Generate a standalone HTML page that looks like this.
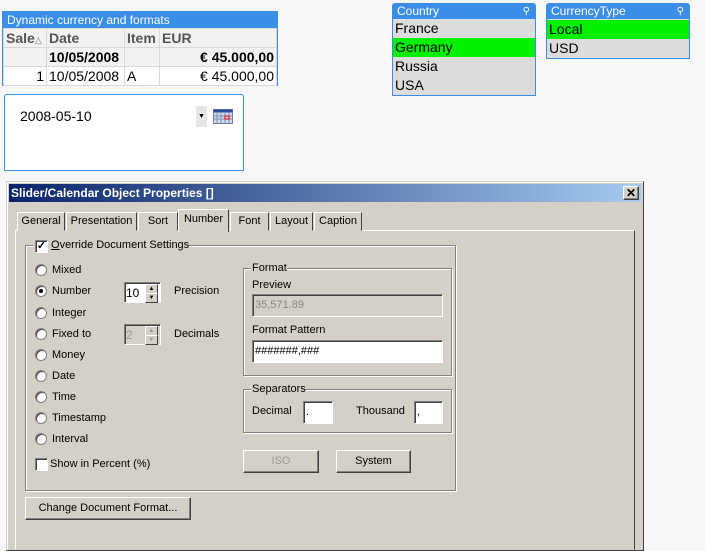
<!DOCTYPE html>
<html><head><meta charset="utf-8"><style>
*{box-sizing:border-box;margin:0;padding:0}
body{width:705px;height:542px;background:#f7f7f7;position:relative;overflow:hidden;font-family:"Liberation Sans",sans-serif}
.a{position:absolute}
.t{font-size:11px;color:#000;white-space:nowrap;position:absolute}
.sunk{position:absolute;background:#fff;border:1px solid;border-color:#808080 #fff #fff #808080;box-shadow:inset 1px 1px 0 #404040}
.btn{position:absolute;background:#d4d0c8;border:1px solid;border-color:#fff #404040 #404040 #fff;box-shadow:inset -1px -1px 0 #808080;font-size:11px;text-align:center;line-height:20px}
.grp{position:absolute;border:1px solid #808080;box-shadow:1px 1px 0 #fff,inset 1px 1px 0 #fff}
.rad{position:absolute;width:12px;height:12px;border-radius:50%;background:#fff;border:1px solid #808080;box-shadow:inset 1px 1px 0 #404040}
.tab{position:absolute;top:212px;height:19px;border:1px solid;border-color:#fff #404040 transparent #fff;font-size:11px;line-height:17px;text-align:center;background:#d4d0c8}
.row{position:absolute;left:0;right:0;height:19px;font-size:14px;padding-left:2px;line-height:19px;color:#000}
.spin{position:absolute;width:13px;height:10px;background:#d4d0c8;border:1px solid;border-color:#fff #404040 #404040 #fff;font-size:6px;line-height:8px;text-align:center}
td{border:1px solid #d8d8d8;padding:0 2px;font-size:14px;height:19px;white-space:nowrap}
</style></head><body>
<!-- table -->
<div class="a" style="left:2px;top:11px;width:276px;height:75px;border:1px solid #3a8ee8;background:#fff">
<div style="height:16px;background:#3a8ee8;color:#fff;font-size:12px;line-height:16px;padding-left:4px">Dynamic currency and formats</div>
<table style="border-collapse:collapse;width:274px;table-layout:fixed">
<col style="width:43px"><col style="width:78px"><col style="width:35px"><col>
<tr style="background:#f2f2f2;font-weight:bold;color:#444"><td style="font-weight:bold;color:#555">Sale<span style="font-size:9px;color:#aaa">△</span></td><td style="font-weight:bold;color:#555">Date</td><td style="font-weight:bold;color:#555">Item</td><td style="font-weight:bold;color:#555">EUR</td></tr>
<tr style="background:#f2f2f2"><td></td><td style="font-weight:bold">10/05/2008</td><td></td><td style="font-weight:bold;text-align:right">€ 45.000,00</td></tr>
<tr><td style="text-align:right">1</td><td>10/05/2008</td><td>A</td><td style="text-align:right">€ 45.000,00</td></tr>
</table></div>
<!-- date box -->
<div class="a" style="left:4px;top:94px;width:240px;height:77px;border:1px solid #3a8ee8;border-radius:3px 3px 0 0;background:#fff">
<div class="t" style="left:15px;top:13px;font-size:14px">2008-05-10</div>
<div class="a" style="left:191px;top:11px;width:11px;height:21px;background:#e6e6e6;font-size:7px;text-align:center;line-height:21px">▼</div>
<svg class="a" style="left:208px;top:14px" width="20" height="15"><rect x="0.5" y="0.5" width="19" height="14" fill="#cfd8ea" stroke="#6b7fa8"/><rect x="0.5" y="0.5" width="19" height="3" fill="#2c4c9c"/><g stroke="#8090b0"><path d="M4 4v10M8 4v10M12 4v10M16 4v10M1 7h18M1 10h18"/></g><rect x="12" y="7" width="4" height="3" fill="none" stroke="#e00"/></svg>
</div>
<!-- Country -->
<div class="a" style="left:392px;top:3px;width:144px;height:93px;border:1px solid #3a8ee8;border-radius:3px 3px 0 0;background:#dcdcdc">
<div style="height:15px;background:#3a8ee8;color:#fff;font-size:12px;line-height:15px;padding-left:4px">Country<span style="position:absolute;right:5px;font-size:10px">⚲</span></div>
<div class="row" style="top:15px">France</div><div class="row" style="top:34px;background:#00f000">Germany</div><div class="row" style="top:53px">Russia</div><div class="row" style="top:72px">USA</div>
</div>
<div class="a" style="left:546px;top:3px;width:144px;height:56px;border:1px solid #3a8ee8;border-radius:3px 3px 0 0;background:#dcdcdc">
<div style="height:15px;background:#3a8ee8;color:#fff;font-size:12px;line-height:15px;padding-left:4px">CurrencyType<span style="position:absolute;right:5px;font-size:10px">⚲</span></div>
<div class="row" style="top:16px;background:#00f000">Local</div><div class="row" style="top:35px">USD</div>
</div>
<!-- dialog -->
<div class="a" style="left:6px;top:181px;width:638px;height:370px;background:#d4d0c8;border:1px solid;border-color:#d4d0c8 #404040 #404040 #d4d0c8;box-shadow:inset 1px 1px 0 #fff"></div>
<div class="a" style="left:9px;top:184px;width:632px;height:18px;background:linear-gradient(90deg,#0a246a,#a6caf0);color:#fff;font-weight:bold;font-size:12px;line-height:18px;padding-left:2px">Slider/Calendar Object Properties []</div>
<div class="btn" style="left:623px;top:186px;width:16px;height:14px;line-height:12px;font-size:12px;font-weight:bold">✕</div>
<div class="a" style="left:15px;top:230px;width:620px;height:320px;border:1px solid;border-color:#fff #404040 transparent #fff"></div>
<div class="tab" style="left:17px;width:48px">General</div>
<div class="tab" style="left:66px;width:71px">Presentation</div>
<div class="tab" style="left:138px;width:40px">Sort</div>
<div class="tab" style="left:178px;top:209px;height:23px;width:51px;line-height:19px;border-bottom:none;z-index:2">Number</div>
<div class="tab" style="left:230px;width:39px">Font</div>
<div class="tab" style="left:270px;width:43px">Layout</div>
<div class="tab" style="left:314px;width:48px">Caption</div>

<div class="grp" style="left:25px;top:245px;width:431px;height:246px"></div>
<div class="a" style="left:33px;top:238px;width:155px;height:14px;background:#d4d0c8"></div>
<div class="sunk" style="left:35px;top:240px;width:13px;height:13px;font-size:11px;line-height:10px;text-align:center;font-weight:bold">✓</div>
<div class="t" style="left:51px;top:239px"><u>O</u>verride Document Settings</div>

<div class="rad" style="left:35px;top:264px"></div><div class="t" style="left:52px;top:264px">Mixed</div>
<div class="rad" style="left:35px;top:285px"><div style="position:absolute;left:3px;top:3px;width:4px;height:4px;border-radius:50%;background:#000"></div></div><div class="t" style="left:52px;top:285px">Number</div>
<div class="rad" style="left:35px;top:307px"></div><div class="t" style="left:52px;top:307px">Integer</div>
<div class="rad" style="left:35px;top:328px"></div><div class="t" style="left:52px;top:328px">Fixed to</div>
<div class="rad" style="left:35px;top:349px"></div><div class="t" style="left:52px;top:349px">Money</div>
<div class="rad" style="left:35px;top:370px"></div><div class="t" style="left:52px;top:370px">Date</div>
<div class="rad" style="left:35px;top:391px"></div><div class="t" style="left:52px;top:391px">Time</div>
<div class="rad" style="left:35px;top:412px"></div><div class="t" style="left:52px;top:412px">Timestamp</div>
<div class="rad" style="left:35px;top:433px"></div><div class="t" style="left:52px;top:433px">Interval</div>
<div class="sunk" style="left:35px;top:458px;width:13px;height:13px"></div><div class="t" style="left:50px;top:458px">Show in Percent (%)</div>

<div class="sunk" style="left:124px;top:282px;width:37px;height:21px"><span class="t" style="left:1px;top:3px;font-size:12px">10</span></div>
<div class="spin" style="left:145px;top:284px">▲</div><div class="spin" style="left:145px;top:293px">▼</div>
<div class="t" style="left:174px;top:285px">Precision</div>
<div class="sunk" style="left:124px;top:324px;width:37px;height:21px;background:#d4d0c8"><span class="t" style="left:1px;top:3px;font-size:12px;color:#999">2</span></div>
<div class="spin" style="left:145px;top:326px;color:#999">▲</div><div class="spin" style="left:145px;top:335px;color:#999">▼</div>
<div class="t" style="left:174px;top:328px">Decimals</div>

<div class="grp" style="left:243px;top:268px;width:209px;height:108px"></div>
<div class="a" style="left:251px;top:262px;width:36px;height:12px;background:#d4d0c8"></div>
<div class="t" style="left:252px;top:262px">Format</div>
<div class="t" style="left:252px;top:279px">Preview</div>
<div class="sunk" style="left:252px;top:294px;width:191px;height:23px;background:#d4d0c8"><span class="t" style="left:2px;top:4px;color:#888">35,571.89</span></div>
<div class="t" style="left:252px;top:324px">Format Pattern</div>
<div class="sunk" style="left:252px;top:340px;width:191px;height:23px"><span class="t" style="left:2px;top:4px">#######,###</span></div>

<div class="grp" style="left:243px;top:389px;width:209px;height:44px"></div>
<div class="a" style="left:251px;top:383px;width:54px;height:12px;background:#d4d0c8"></div>
<div class="t" style="left:252px;top:383px">Separators</div>
<div class="t" style="left:252px;top:405px">Decimal</div>
<div class="sunk" style="left:303px;top:401px;width:30px;height:23px"><span class="t" style="left:2px;top:4px">.</span></div>
<div class="t" style="left:356px;top:405px">Thousand</div>
<div class="sunk" style="left:414px;top:401px;width:29px;height:23px"><span class="t" style="left:2px;top:4px">,</span></div>

<div class="btn" style="left:243px;top:450px;width:76px;height:23px;color:#999">ISO</div>
<div class="btn" style="left:336px;top:450px;width:75px;height:23px">System</div>
<div class="btn" style="left:25px;top:497px;width:166px;height:23px">Change Document Format...</div>
</body></html>
